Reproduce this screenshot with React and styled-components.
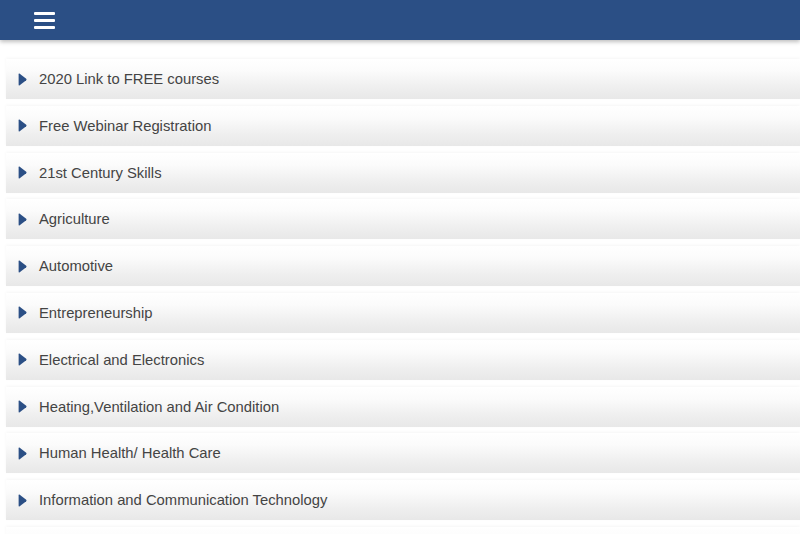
import styled, { createGlobalStyle } from "styled-components";

const GlobalStyle = createGlobalStyle`
  body {
    margin: 0;
    background: #ffffff;
    font-family: "Liberation Sans", Arial, sans-serif;
    overflow: hidden;
  }
`;

const Header = styled.header`
  height: 40px;
  background: #2b4f85;
  display: flex;
  align-items: center;
  padding-left: 34px;
  box-shadow: 0 2px 4px rgba(0, 0, 0, 0.25);
  position: relative;
  z-index: 1;
`;

const MenuButton = styled.button`
  width: 21px;
  height: 17px;
  padding: 0;
  border: none;
  background: transparent;
  display: flex;
  flex-direction: column;
  justify-content: space-between;
  cursor: pointer;

  span {
    display: block;
    height: 3px;
    background: #ffffff;
    border-radius: 1px;
  }
`;

const List = styled.ul`
  list-style: none;
  margin: 0;
  padding: 19px 0 0 6px;
  display: flex;
  flex-direction: column;
  gap: 6.8px;
`;

const Item = styled.li`
  height: 40px;
  display: flex;
  align-items: center;
  padding-left: 12px;
  background: linear-gradient(to bottom, #ffffff 0%, #fbfbfb 30%, #efefef 70%, #e8e8e8 100%);
  box-shadow: 0 -1px 3px rgba(0, 0, 0, 0.04);
  color: #444444;
  font-size: 14.8px;
  cursor: pointer;
`;

const Arrow = styled.svg`
  width: 9px;
  height: 13px;
  margin-right: 12px;
  flex-shrink: 0;
`;

const courses = [
  "2020 Link to FREE courses",
  "Free Webinar Registration",
  "21st Century Skills",
  "Agriculture",
  "Automotive",
  "Entrepreneurship",
  "Electrical and Electronics",
  "Heating,Ventilation and Air Condition",
  "Human Health/ Health Care",
  "Information and Communication Technology",
];

const App = () => {
  return (
    <>
      <GlobalStyle />
      <Header>
        <MenuButton aria-label="menu">
          <span />
          <span />
          <span />
        </MenuButton>
      </Header>
      <List>
        {courses.map((name) => (
          <Item key={name}>
            <Arrow viewBox="0 0 9 13">
              <path d="M1.4 0.6 Q0.6 0.2 0.6 1.4 L0.6 11.6 Q0.6 12.8 1.4 12.4 L8.2 7.3 Q9 6.5 8.2 5.7 Z" fill="#2b4f85" />
            </Arrow>
            {name}
          </Item>
        ))}
        <Item aria-hidden="true" />
      </List>
    </>
  );
};

export default App;
